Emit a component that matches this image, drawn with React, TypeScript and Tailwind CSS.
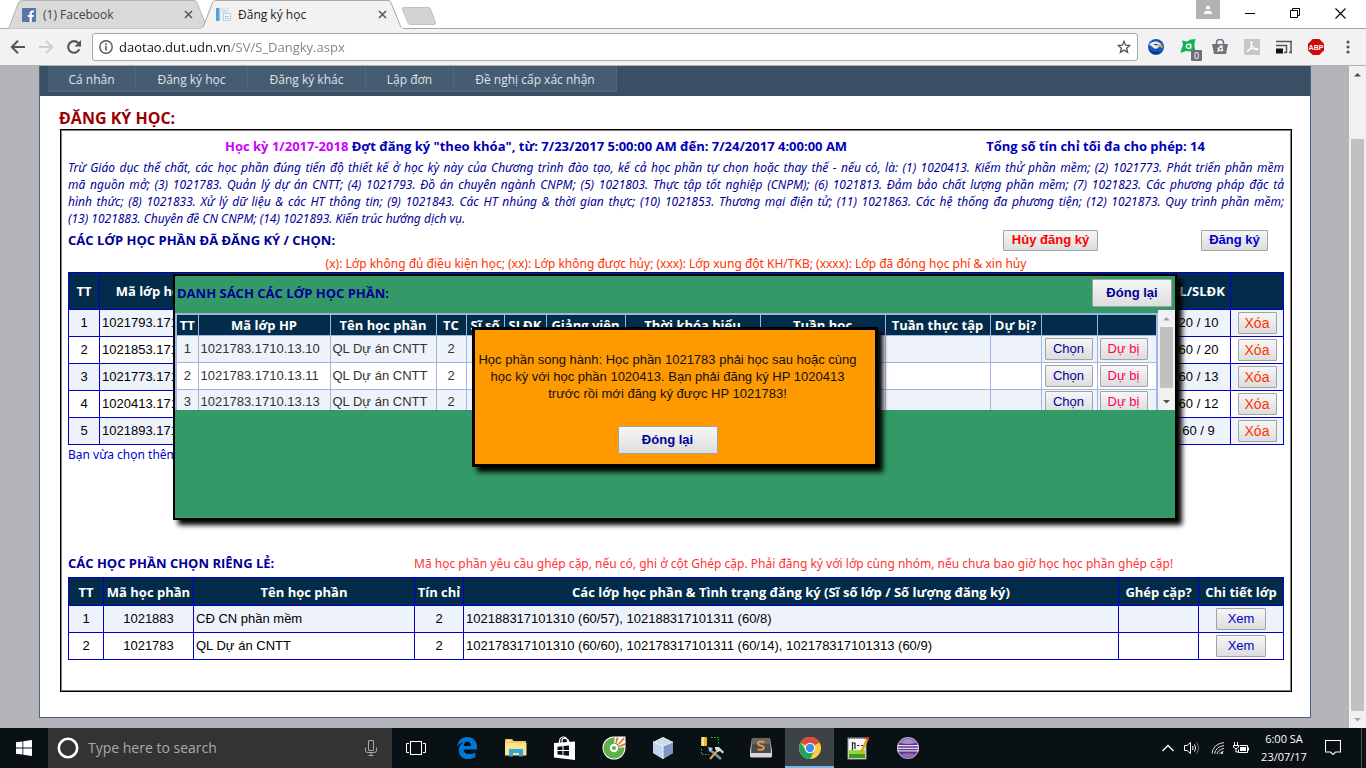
import React from "react";

const UI = "font-['Open_Sans','Noto_Sans',sans-serif]";
const NOTO = "font-['Noto_Sans','Open_Sans',sans-serif]";
const ARIAL = "font-['Liberation_Sans',sans-serif]";

/* ---------- Browser icons ---------- */

function CloseX() {
  return (
    <svg width="9" height="9" viewBox="0 0 9 9" stroke="#5a5a5a" strokeWidth="1.6" fill="none">
      <path d="M1 1l7 7M8 1l-7 7" />
    </svg>
  );
}

function FacebookIcon() {
  return (
    <svg width="14" height="14" viewBox="0 0 14 14">
      <rect width="14" height="14" fill="#5b74ae" />
      <path d="M9.8 14V8.9h1.8l.3-2H9.8V5.6c0-.7.3-1.1 1.1-1.1h1.1V2.6c-.3 0-.9-.1-1.5-.1-1.8 0-2.9 1-2.9 2.8v1.6H5.8v2h1.8V14z" fill="#fff" />
    </svg>
  );
}

function PageIcon() {
  return (
    <svg width="15" height="15" viewBox="0 0 15 15">
      <rect x="0" y="1" width="3.500" height="13" fill="#4fa3d8" />
      <rect x="4.500" y="1.500" width="8" height="11" fill="#e9eff6" stroke="#dde4ec" />
      <rect x="7.500" y="6.500" width="7" height="7" fill="#f5f8fb" stroke="#c3cfdc" />
      <path d="M6 4h5M9 9.500h4M9 11.500h4" stroke="#b5c3d4" strokeWidth="1" />
    </svg>
  );
}

function TabShape({ active }: { active?: boolean }) {
  return (
    <svg className="absolute inset-0 h-full w-full" viewBox="0 0 204 29" preserveAspectRatio="none">
      <path
        d="M0 29L1 28.500C3 28 3.500 26.500 4 25L12 4C13 1.500 13.500.5 15.500.5H188C190 .5 190.500 1.500 191.500 4L200 25C200.500 26.500 201 28 203 28.500L204 29z"
        fill={active ? "#f2f2f2" : "#d9d9d9"}
        stroke={active ? "#a8a8a8" : "#b4b4b4"}
      />
      {active && <path d="M1 28.500H203" stroke="#f2f2f2" strokeWidth="1.500" />}
    </svg>
  );
}

function BrowserTab({ title, icon, active }: { title: string; icon: React.ReactNode; active?: boolean }) {
  return (
    <div className={"relative flex h-[29px] w-[204px] shrink-0 items-center pr-4 pl-4 " + (active ? "z-10 -ml-[10px]" : "")}>
      <TabShape active={active} />
      <div className="relative flex w-full items-center gap-[7px]">
        {icon}
        <span className={"grow text-[12px] leading-4 " + (active ? "text-[#222]" : "text-[#444]")}>{title}</span>
        <button aria-label={"Close " + title} className="flex size-3 items-center justify-center">
          <CloseX />
        </button>
      </div>
    </div>
  );
}

function TabStrip() {
  return (
    <div className="flex h-[29px] shrink-0 items-start border-b border-[#a8a8a8] bg-white pl-[6px]">
      <BrowserTab title="(1) Facebook" icon={<FacebookIcon />} />
      <BrowserTab title="Đăng ký học" icon={<PageIcon />} active />
      <button aria-label="New tab" className="-ml-[3px] mt-[7px]">
        <svg width="36" height="18" viewBox="0 0 36 18">
          <path d="M2.500.5H27.500Q29 .5 29.500 2L34.500 15.500Q35 17.500 33 17.500H9.500Q7.500 17.500 7 16L1.500 2.500Q1 .5 2.500.5z" fill="#d3d3d3" stroke="#c0c0c0" />
        </svg>
      </button>
      <div className="ml-auto flex items-start">
        <button aria-label="Profile" className="flex h-[19px] w-6 items-center justify-center bg-[#b2b2b2]">
          <svg width="10" height="10" viewBox="0 0 10 10" fill="#fff">
            <circle cx="5" cy="2.500" r="2" />
            <path d="M1 9V7.800C1 6.500 3 5.700 5 5.700s4 .8 4 2.100V9z" />
          </svg>
        </button>
        <button aria-label="Minimize" className="mt-2 ml-[25px] flex h-3 w-[10px] items-center">
          <svg width="10" height="2" viewBox="0 0 10 2"><rect y="0" width="10" height="1" fill="#000" /></svg>
        </button>
        <button aria-label="Restore" className="mt-2 ml-[35px]">
          <svg width="10" height="10" viewBox="0 0 10 10" fill="none" stroke="#000">
            <path d="M.5 2.500h7v7h-7zM2.500 2.500v-2h7v7h-2" />
          </svg>
        </button>
        <button aria-label="Close window" className="mt-2 mr-5 ml-[35px]">
          <svg width="11" height="11" viewBox="0 0 11 11" fill="none" stroke="#000" strokeWidth="1.100">
            <path d="M.5.5l10 10M10.500.5l-10 10" />
          </svg>
        </button>
      </div>
    </div>
  );
}

function Toolbar() {
  return (
    <div className="flex h-[37px] shrink-0 items-center border-b border-[#b0b0b0] bg-[#f2f2f2] pr-[10px] pl-[10px]">
      <button aria-label="Back">
        <svg width="16" height="16" viewBox="0 0 16 16" fill="none" stroke="#555" strokeWidth="2">
          <path d="M15 8H2.500M8 1.800L1.800 8L8 14.200" />
        </svg>
      </button>
      <button aria-label="Forward" className="ml-3">
        <svg width="16" height="16" viewBox="0 0 16 16" fill="none" stroke="#cfcfcf" strokeWidth="2">
          <path d="M1 8h12.500M8 1.800L14.200 8L8 14.200" />
        </svg>
      </button>
      <button aria-label="Reload" className="ml-3">
        <svg width="16" height="16" viewBox="0 0 16 16" fill="none">
          <path d="M13.300 10.200A5.800 5.800 0 1 1 12.300 4.100" stroke="#555" strokeWidth="2.100" />
          <path d="M15 1v6.500H8.500z" fill="#555" />
        </svg>
      </button>
      <label className="ml-[10px] flex h-7 grow items-center rounded-[3px] border border-[#a9a9a9] bg-white px-[6px]">
        <svg width="14" height="14" viewBox="0 0 14 14" fill="none" stroke="#555" strokeWidth="1.400">
          <circle cx="7" cy="7" r="6.200" />
          <path d="M7 6v4.500M7 3.300v1.600" strokeWidth="1.600" />
        </svg>
        <input
          aria-label="Address"
          defaultValue="daotao.dut.udn.vn/SV/S_Dangky.aspx"
          className="ml-[6px] grow bg-[linear-gradient(90deg,#111_112px,#808080_112px)] bg-clip-text text-[13px] leading-5 text-transparent outline-none"
        />
        <svg width="14" height="14" viewBox="0 0 14 14" fill="none" stroke="#555" strokeWidth="1.300">
          <path d="M7 1.300l1.600 3.900 4.200.3-3.200 2.700 1 4.100L7 10.100l-3.600 2.200 1-4.100L1.200 5.500l4.200-.3z" />
        </svg>
      </label>
      <div className="ml-[10px] flex items-center gap-4">
        <svg width="16" height="16" viewBox="0 0 16 16">
          <circle cx="8" cy="8" r="8" fill="#1458b8" />
          <path d="M1 5.500C4 2 9 1.500 12 4c1 1 2 2 2.600 4.500C12 7.500 10 8 9 9.500c-2 .8-3.500-.5-4.500-1.500C3.500 7 2.500 6.500 1 5.500z" fill="#e9eef5" />
          <path d="M9.500 5.500c2.500-1 5 .5 5.300 4-1.500-1.500-3-2-5-1.500z" fill="#efa11f" />
          <path d="M5 5.500l4.500-.8-1 1.800z" fill="#223" />
          <path d="M1 10c3 3 8 4 12 2-3 4-9.500 4.500-12-2z" fill="#0a3276" />
        </svg>
        <div className="relative size-4">
          <svg width="16" height="16" viewBox="0 0 16 16">
            <path d="M2 1.500L7 2.500L10.500.5L15.500 0L14.500 4.500L14.500 8L15.500 12L10 12.500L6 12L.5 14L1.500 9.500L3 6z" fill="#14b455" />
            <circle cx="8.500" cy="7.200" r="2.100" fill="none" stroke="#fff" strokeWidth="1.200" />
            <path d="M10.800 4.800V9.700" stroke="#fff" strokeWidth="1.200" />
          </svg>
          <span className="absolute top-[11px] left-[11px] flex h-[11px] w-[11px] items-center justify-center rounded-[1px] bg-[#6d7080] text-[9px] leading-none text-white">0</span>
        </div>
        <svg width="16" height="16" viewBox="0 0 16 16">
          <path d="M0 5h16l-2 10H2z" fill="#6f717d" />
          <path d="M4.500 6V3.500a3.500 3 0 0 1 7 0V6" fill="none" stroke="#6f717d" strokeWidth="1.600" />
          <path d="M5 13l1-3-1-1 2-.5 1-2h3l-.5 2.500 1 2.500-1.500 1-2-.5z" fill="#f2f2f2" />
          <circle cx="8.500" cy="9.800" r="1.100" fill="#6f717d" />
        </svg>
        <svg width="16" height="16" viewBox="0 0 16 16">
          <rect width="16" height="16" fill="#c6c6c6" />
          <path d="M3 13c2-1 4.500-5 5-9.500.2-1-1.200-1-1 0C7.500 7 10 10.500 13 10.800c1 0 1-1-.2-1.200C10 9.200 5.500 10 3.200 12" fill="none" stroke="#fff" strokeWidth="1.200" />
        </svg>
        <svg width="16" height="14" viewBox="0 0 16 14">
          <path d="M0 1.500h16M15 1v12M0 5.500h11M10.500 5v8M8 12.500h3M13 12.500h3" stroke="#555" strokeWidth="1.500" fill="none" />
          <rect x="0" y="8.500" width="7" height="5" fill="#111" />
        </svg>
        <svg width="16" height="16" viewBox="0 0 16 16">
          <path d="M4.700 0h6.600L16 4.700v6.600L11.300 16H4.700L0 11.300V4.700z" fill="#cf0a0a" />
          <text x="8" y="10.500" textAnchor="middle" fontSize="7" fontWeight="700" fontFamily="Liberation Sans" fill="#fff">ABP</text>
        </svg>
        <button aria-label="Menu" className="flex w-4 justify-center">
          <svg width="4" height="14" viewBox="0 0 4 14" fill="#555">
            <circle cx="2" cy="2" r="1.600" /><circle cx="2" cy="7" r="1.600" /><circle cx="2" cy="12" r="1.600" />
          </svg>
        </button>
      </div>
    </div>
  );
}

/* ---------- Page ---------- */

const btnBase =
  "rounded-[1px] border border-[#a3a3a3] bg-gradient-to-b from-[#f6f6f6] to-[#dddddd] leading-4 whitespace-nowrap " + ARIAL;

function NavBar() {
  const items = ["Cá nhân", "Đăng ký học", "Đăng ký khác", "Lập đơn", "Đề nghị cấp xác nhận"];
  const widths = ["w-[88px]", "w-[112px]", "w-[118px]", "w-[88px]", "w-[163px]"];
  return (
    <nav className="flex h-[30px] items-start bg-[#3a4f63] pl-2">
      {items.map((t, i) => (
        <a
          key={t}
          href="#"
          className={"flex h-[26px] items-center justify-center border-r border-b border-[#4b6783] bg-[#465c71] pt-[2px] text-[12px] text-[#dde4ec] " + widths[i]}
        >
          {t}
        </a>
      ))}
    </nav>
  );
}

const registered = [
  ["1", "1021793.171", "20 / 10"],
  ["2", "1021853.171", "60 / 20"],
  ["3", "1021773.171", "60 / 13"],
  ["4", "1020413.171", "60 / 12"],
  ["5", "1021893.171", "60 / 9"],
];

const cell = "border border-[#0000cc]";
const headCell = cell + " p-0 text-[13px] font-bold whitespace-nowrap text-white";

function RegisteredTable() {
  return (
    <table className={"w-full table-fixed border-collapse text-[13px] leading-4 text-black " + ARIAL}>
      <colgroup>
        <col className="w-[31px]" />
        <col className="w-[140px]" />
        <col />
        <col className="w-[64px]" />
        <col className="w-[53px]" />
      </colgroup>
      <thead>
        <tr className={"h-[37px] bg-[#032c4b] " + UI}>
          <th className={headCell}>TT</th>
          <th className={headCell}>Mã lớp học phần</th>
          <th className={headCell}></th>
          <th className={headCell}>SL/SLĐK</th>
          <th className={headCell}></th>
        </tr>
      </thead>
      <tbody>
        {registered.map(([n, code, count]) => (
          <tr key={n} className="h-[27px] odd:bg-[#eef2fb]">
            <td className={cell + " p-0 text-center"}>{n}</td>
            <td className={cell + " px-[2px] py-0"}>{code}</td>
            <td className={cell + " p-0"}></td>
            <td className={cell + " p-0 text-center"}>{count}</td>
            <td className={cell + " p-0 text-center"}>
              <button className={btnBase + " block mx-auto h-[22px] w-[39px] text-[14px] text-[#ff3300]"}>Xóa</button>
            </td>
          </tr>
        ))}
      </tbody>
    </table>
  );
}

const singles = [
  ["1", "1021883", "CĐ CN phần mềm", "2", "102188317101310 (60/57), 102188317101311 (60/8)"],
  ["2", "1021783", "QL Dự án CNTT", "2", "102178317101310 (60/60), 102178317101311 (60/14), 102178317101313 (60/9)"],
];

function SinglesTable() {
  return (
    <table className={"mt-[5px] w-full table-fixed border-collapse text-[13px] leading-4 text-black " + ARIAL}>
      <colgroup>
        <col className="w-[35px]" />
        <col className="w-[90px]" />
        <col className="w-[221px]" />
        <col className="w-[49px]" />
        <col />
        <col className="w-[80px]" />
        <col className="w-[85px]" />
      </colgroup>
      <thead>
        <tr className={"h-7 bg-[#032c4b] " + UI}>
          {["TT", "Mã học phần", "Tên học phần", "Tín chỉ", "Các lớp học phần & Tình trạng đăng ký (Sĩ số lớp / Số lượng đăng ký)", "Ghép cặp?", "Chi tiết lớp"].map((h) => (
            <th key={h} className={headCell}>{h}</th>
          ))}
        </tr>
      </thead>
      <tbody>
        {singles.map(([n, code, name, tc, classes]) => (
          <tr key={n} className="h-[27px] odd:bg-[#eef2fb]">
            <td className={cell + " p-0 text-center"}>{n}</td>
            <td className={cell + " p-0 text-center"}>{code}</td>
            <td className={cell + " px-[2px] py-0"}>{name}</td>
            <td className={cell + " p-0 text-center"}>{tc}</td>
            <td className={cell + " px-[2px] py-0"}>{classes}</td>
            <td className={cell + " p-0"}></td>
            <td className={cell + " p-0 text-center"}>
              <button className={btnBase + " block mx-auto h-[22px] w-[50px] text-[13px] text-[#0000cc]"}>Xem</button>
            </td>
          </tr>
        ))}
      </tbody>
    </table>
  );
}

const paragraph = [
  "Trừ Giáo dục thể chất, các học phần đúng tiến độ thiết kế ở học kỳ này của Chương trình đào tạo, kể cả học phần tự chọn hoặc thay thế - nếu có, là: (1) 1020413. Kiểm thử phần mềm; (2) 1021773. Phát triển phần mềm",
  "mã nguồn mở; (3) 1021783. Quản lý dự án CNTT; (4) 1021793. Đồ án chuyên ngành CNPM; (5) 1021803. Thực tập tốt nghiệp (CNPM); (6) 1021813. Đảm bảo chất lượng phần mềm; (7) 1021823. Các phương pháp đặc tả",
  "hình thức; (8) 1021833. Xử lý dữ liệu & các HT thông tin; (9) 1021843. Các HT nhúng & thời gian thực; (10) 1021853. Thương mại điện tử; (11) 1021863. Các hệ thống đa phương tiện; (12) 1021873. Quy trình phần mềm;",
];

function PageContent() {
  return (
    <main className="mr-[38px] ml-[39px] border-x border-b border-[#496280] bg-white pb-[25px]">
      <NavBar />
      <h1 className="mt-3 ml-[19px] text-[16px] leading-[21px] font-bold text-[#990000]">ĐĂNG KÝ HỌC:</h1>
      <section className="mr-[18px] ml-5 border border-black px-[7px] pt-[7px] pb-[31px] shadow-[inset_0_0_0_1px_#808080]">
        <div className="flex h-[18px] items-center pr-[79px] pl-[157px] text-[13px] leading-[18px] font-bold whitespace-nowrap text-[#0000bb]">
          <p>
            <span className="text-[#cc00ff]">Học kỳ 1/2017-2018</span> Đợt đăng ký "theo khóa", từ: 7/23/2017 5:00:00 AM đến: 7/24/2017 4:00:00 AM
          </p>
          <p className="ml-auto">Tổng số tín chỉ tối đa cho phép: 14</p>
        </div>
        <p className={"mt-1 text-[12px] leading-[17px] text-[#000099] italic " + NOTO}>
          {paragraph.map((l) => (
            <span key={l} className="block whitespace-nowrap [text-align-last:justify]">{l}</span>
          ))}
          <span className="block">(13) 1021883. Chuyên đề CN CNPM; (14) 1021893. Kiến trúc hướng dịch vụ.</span>
        </p>
        <div className="mt-px flex h-6 items-center pr-4">
          <h2 className="text-[13px] leading-[17px] font-bold text-[#000099]">CÁC LỚP HỌC PHẦN ĐÃ ĐĂNG KÝ / CHỌN:</h2>
          <button className={btnBase + " ml-auto h-[21px] w-[95px] text-[13px] font-bold text-[#ff0000]"}>Hủy đăng ký</button>
          <button className={btnBase + " ml-[103px] h-[21px] w-[67px] text-[13px] font-bold text-[#0000cc]"}>Đăng ký</button>
        </div>
        <p className={"mt-1 h-4 text-center text-[12px] leading-4 text-[#ff3300] " + NOTO}>
          (x): Lớp không đủ điều kiện học; (xx): Lớp không được hủy; (xxx): Lớp xung đột KH/TKB; (xxxx): Lớp đã đóng học phí &amp; xin hủy
        </p>
        <RegisteredTable />
        <p className={"h-5 text-[12px] leading-5 text-[#0000cc] " + NOTO}>Bạn vừa chọn thêm</p>
        <div className="mt-[90px] flex h-[17px] items-center">
          <h2 className="w-[346px] text-[13px] leading-[17px] font-bold text-[#000099]">CÁC HỌC PHẦN CHỌN RIÊNG LẺ:</h2>
          <p className={"text-[12px] leading-[17px] text-[#ff3333] " + NOTO}>
            Mã học phần yêu cầu ghép cặp, nếu có, ghi ở cột Ghép cặp. Phải đăng ký với lớp cùng nhóm, nếu chưa bao giờ học học phần ghép cặp!
          </p>
        </div>
        <SinglesTable />
      </section>
    </main>
  );
}

function Scrollbar({ children, upMuted }: { children: React.ReactNode; upMuted?: boolean }) {
  return (
    <div className="flex w-[17px] shrink-0 flex-col items-center bg-[#f1f1f1]">
      <svg width="17" height="17" viewBox="0 0 17 17"><path d="M5 10.500L8.500 7l3.500 3.500z" fill={upMuted ? "#a3a3a3" : "#505050"} /></svg>
      <div className="flex w-[13px] grow flex-col">{children}</div>
      <svg width="17" height="17" viewBox="0 0 17 17"><path d="M5 7l3.500 3.500L12 7z" fill={upMuted ? "#505050" : "#a3a3a3"} /></svg>
    </div>
  );
}

const mCell = "border border-[#9fb6e3]";

function ClassDialog() {
  const heads = ["TT", "Mã lớp HP", "Tên học phần", "TC", "Sĩ số", "SLĐK", "Giảng viên", "Thời khóa biểu", "Tuần học", "Tuần thực tập", "Dự bị?", "", ""];
  return (
    <div role="dialog" aria-label="Danh sách các lớp học phần" className="absolute top-[208px] right-[172px] left-[173px] h-[246px] border-2 border-black bg-[#339966] shadow-[5px_5px_5px_#000]">
      <div className="flex h-[34px] items-center justify-between pr-[3px] pl-[2px]">
        <h2 className="text-[13px] leading-5 font-bold text-[#000099]">DANH SÁCH CÁC LỚP HỌC PHẦN:</h2>
        <button className={btnBase + " h-7 w-20 text-[13px] font-bold text-[#000099]"}>Đóng lại</button>
      </div>
      <div className="flex h-[100px] overflow-hidden">
        <div className="grow overflow-hidden pt-[3px]">
          <table className={"w-full table-fixed border-collapse border-2 border-[#9fb6e3] text-[13px] leading-4 text-[#333] " + ARIAL}>
            <colgroup>
              <col className="w-[22px]" />
              <col className="w-[132px]" />
              <col className="w-[106px]" />
              <col className="w-[30px]" />
              <col className="w-[38px]" />
              <col className="w-[42px]" />
              <col className="w-[79px]" />
              <col className="w-[135px]" />
              <col />
              <col className="w-[105px]" />
              <col className="w-[51px]" />
              <col className="w-[56px]" />
              <col className="w-[60px]" />
            </colgroup>
            <thead>
              <tr className={"h-[21px] bg-[#032c4b] " + UI}>
                {heads.map((h, i) => (
                  <th key={i} className={mCell + " p-0 text-[13px] font-bold whitespace-nowrap text-white"}>{h}</th>
                ))}
              </tr>
            </thead>
            <tbody>
              {["10", "11", "13"].map((s, i) => (
                <tr key={s} className="h-[27px] bg-white odd:bg-[#eef2fb]">
                  <td className={mCell + " p-0 text-center"}>{i + 1}</td>
                  <td className={mCell + " px-[2px] py-0"}>{"1021783.1710.13." + s}</td>
                  <td className={mCell + " px-[2px] py-0"}>QL Dự án CNTT</td>
                  <td className={mCell + " p-0 text-center"}>2</td>
                  {[0, 1, 2, 3, 4, 5, 6].map((k) => (
                    <td key={k} className={mCell + " p-0"}></td>
                  ))}
                  <td className={mCell + " py-0 pr-0 pl-[3px]"}>
                    <button className={btnBase + " block h-[22px] w-12 text-[13px] text-[#000099]"}>Chọn</button>
                  </td>
                  <td className={mCell + " py-0 pr-0 pl-[2px]"}>
                    <button className={btnBase + " block h-[22px] w-12 text-[13px] text-[#ff0055]"}>Dự bị</button>
                  </td>
                </tr>
              ))}
            </tbody>
          </table>
        </div>
        <Scrollbar upMuted>
          <div className="h-[61px] bg-[#c1c1c1]" />
        </Scrollbar>
      </div>
    </div>
  );
}

function AlertDialog() {
  return (
    <div className="absolute inset-x-0 top-[261px] flex justify-center">
      <div role="alertdialog" aria-label="Thông báo" className={"flex h-[140px] w-[406px] flex-col items-center border-[3px] border-black bg-[#ff9900] pt-[21px] pr-[14px] shadow-[5px_5px_5px_#000] " + ARIAL}>
        <p className="text-center text-[13px] leading-[17px] whitespace-nowrap text-[#111]">
          Học phần song hành: Học phần 1021783 phải học sau hoặc cùng<br />
          học kỳ với học phần 1020413. Bạn phải đăng ký HP 1020413<br />
          trước rồi mới đăng ký được HP 1021783!
        </p>
        <button className={btnBase + " mt-6 h-7 w-[100px] text-[13px] font-bold text-[#000099]"}>Đóng lại</button>
      </div>
    </div>
  );
}

/* ---------- Taskbar ---------- */

function TaskButton({ label, active, children }: { label: string; active?: boolean; children: React.ReactNode }) {
  return (
    <button
      aria-label={label}
      className={"flex h-10 w-[49px] items-center justify-center " + (active ? "border-b-2 border-[#76b9ed] bg-[#3d4246] pt-[2px]" : "")}
    >
      {children}
    </button>
  );
}

function Taskbar() {
  return (
    <footer className="flex h-10 shrink-0 items-center bg-[#0a1115]">
      <button aria-label="Start" className="flex h-10 w-12 items-center justify-center">
        <svg width="16" height="16" viewBox="0 0 16 16" fill="#fff">
          <path d="M0 2.300L6.500 1.400V7.600H0zM7.300 1.300L16 0V7.600H7.300zM0 8.400H6.500V14.600L0 13.700zM7.300 8.400H16V16L7.300 14.700z" />
        </svg>
      </button>
      <label className="flex h-10 w-[344px] items-center bg-[#333] pr-[15px] pl-[9px]">
        <svg width="22" height="22" viewBox="0 0 22 22"><circle cx="11" cy="11" r="9.200" fill="none" stroke="#fff" strokeWidth="2.600" /></svg>
        <input aria-label="Search" placeholder="Type here to search" className="ml-[9px] w-0 grow bg-transparent text-[14px] leading-5 outline-none placeholder:text-[#aaa]" />
        <svg width="12" height="16" viewBox="0 0 12 16" fill="none" stroke="#aaa">
          <rect x="3.500" y=".5" width="5" height="10" rx=".5" />
          <path d="M.5 7.500V10.500Q.5 12.500 2.500 12.500H9.500Q11.500 12.500 11.500 10.500V7.500M6 12.500V15.500M3.500 15.500H8.500" />
        </svg>
      </label>
      <button aria-label="Task view" className="flex h-10 w-12 items-center justify-center">
        <svg width="20" height="14" viewBox="0 0 20 14" fill="none" stroke="#fff">
          <rect x="4.500" y=".5" width="11" height="13" />
          <path d="M3 2.500H.5V11.500H3M17 2.500H19.500V11.500H17" />
        </svg>
      </button>
      <div className="ml-[2px] flex">
        <TaskButton label="Edge">
          <svg width="20" height="22" viewBox="0 0 20 22">
            <path d="M0 9.500C.8 4 4.500 0 10.300 0 16 0 20 4 20 10v2.600H6.500c.2 3 2.600 4.500 5.800 4.500 2.200 0 4.200-.5 6-1.600v4.700c-2 1.200-4.600 1.800-7.300 1.800C5.500 22 1.800 18.700 1.800 13.400c0-3.400 1.800-6.200 4.700-7.800C3.800 5.800 1.500 7.200 0 9.500zM6.700 9h7.200c0-2.700-1.300-4.400-3.600-4.400C8.300 4.600 7 6.500 6.700 9z" fill="#0078d7" />
          </svg>
        </TaskButton>
        <TaskButton label="File Explorer">
          <svg width="22" height="20" viewBox="0 0 22 20">
            <path d="M0 2Q0 1 1 1H7l1.500 2H20.500Q21 3 21 3.500V17H0z" fill="#f0c65a" />
            <path d="M1.500 2.500h4v1h-4z" fill="#fff" />
            <path d="M0 5H21.500V17.500H0z" fill="#fde28f" />
            <path d="M4 18.500V12Q4 11 5 11H17Q18 11 18 12V18.500H14V15H8V18.500z" fill="#2da8e0" />
          </svg>
        </TaskButton>
        <TaskButton label="Store">
          <svg width="21" height="24" viewBox="0 0 21 24">
            <path d="M5.500 8V5Q6 1 9.500 1Q13 1 13.500 5V6.500M8 7V4Q8.500 2 11.500 2.500Q14.500 3 15 6" fill="none" stroke="#fff" strokeWidth="1.200" />
            <path d="M0 7L21 5.500V24L0 21.500z" fill="#fff" />
            <path d="M3.500 10.700L8.500 10.200V14H3.500zM9.500 10.100L15 9.500V14H9.500zM3.500 15H8.500V19L3.500 18.500zM9.500 15H15V19.800L9.500 19.200z" fill="#0a1115" />
          </svg>
        </TaskButton>
        <TaskButton label="Cốc Cốc">
          <svg width="24" height="24" viewBox="0 0 24 24">
            <path d="M12 .5H23.500V12A11.500 11.500 0 1 1 12 .5z" fill="#fff" />
            <path d="M13 1.600L11.700 7A5 5 0 1 0 17 12.300L22.400 11A10.500 10.500 0 1 1 13 1.600z" fill="#5fb04c" />
            <circle cx="12" cy="12" r="5.600" fill="#5fb04c" />
            <circle cx="12" cy="12" r="4.200" fill="#fff" />
            <circle cx="12" cy="12" r="2" fill="#5fb04c" />
            <path d="M13.500 6.500L14.500 1.500l2 .2-1.500 5.300zM16 7.800L21.500 1.500l1.300 1.300-5.500 6zM17.500 9.600L23 7v2.200l-5 2z" fill="#f26a2a" />
          </svg>
        </TaskButton>
        <TaskButton label="VirtualBox">
          <svg width="22" height="22" viewBox="0 0 22 22">
            <path d="M11 0L21 5V16L11 22L1 16V5z" fill="#8aa3c8" />
            <path d="M11 0L21 5L11 9L1 5z" fill="#c9dfe0" />
            <path d="M1 5L11 9V22L1 16z" fill="#c0d3f0" />
            <path d="M11 9L21 5V16L11 22z" fill="#8095c0" />
            <path d="M1 5L11 9L21 5M11 9V22" stroke="#eef6fb" fill="none" />
          </svg>
        </TaskButton>
        <TaskButton label="SQL tools">
          <svg width="24" height="24" viewBox="0 0 24 24">
            <rect x="1" y="1" width="6" height="9" rx="1" fill="#e9b52c" />
            <rect x="2" y="1" width="2" height="9" fill="#fbe48f" />
            <path d="M11 1.500H18.500V8M1.500 13V18.500H9" fill="none" stroke="#35c22d" strokeDasharray="1.500 1.500" />
            <path d="M9 13L21 23" stroke="#7d97b8" strokeWidth="2.500" />
            <path d="M8 11l5 1-3 4z" fill="#b8c7da" />
            <path d="M10 23L18 14" stroke="#d9a441" strokeWidth="2.200" />
            <path d="M15 11l4 0 5 5-1.500 1.500L20 15l-2 1-3-3z" fill="#d7dfe8" />
          </svg>
        </TaskButton>
        <TaskButton label="Sublime Text">
          <svg width="24" height="20" viewBox="0 0 24 20">
            <path d="M1 13L3 0H21L23 13V18Q23 19.500 21.500 19.500H2.500Q1 19.500 1 18z" fill="#d8d8d8" />
            <path d="M3 0H21L22 15H2z" fill="#4b4b4b" />
            <path d="M3 0H21L21.500 6H2.500z" fill="#666" />
            <path d="M15.500 4Q9 2.500 9 5.500Q9 7.300 12 7.700Q15.300 8.300 14.800 10.300Q14.200 12.500 8.500 11.300" fill="none" stroke="#f49a45" strokeWidth="1.800" />
          </svg>
        </TaskButton>
        <TaskButton label="Chrome" active>
          <svg width="22" height="22" viewBox="0 0 22 22">
            <circle cx="11" cy="11" r="11" fill="#ffcd41" />
            <path d="M11 11L1.500 5.500A11 11 0 0 1 20.500 5.500z" fill="#dd4b3e" />
            <path d="M11 0A11 11 0 0 1 20.500 5.500H11L6.500 8z" fill="#dd4b3e" />
            <path d="M1.500 5.500A11 11 0 0 0 11 22L15.500 13.500L11 11L6.500 13z" fill="#1da462" />
            <circle cx="11" cy="11" r="5.300" fill="#fff" />
            <circle cx="11" cy="11" r="4.200" fill="#4a8af4" />
          </svg>
        </TaskButton>
        <TaskButton label="Notepad++">
          <svg width="23" height="24" viewBox="0 0 23 24">
            <rect x="1" y="2" width="18" height="21" fill="#f8f8f8" stroke="#999" />
            <rect x="2" y="14" width="16" height="8" fill="#8fdc3a" />
            <path d="M2 18H18V22H2z" fill="#3c9a14" />
            <path d="M2 2h16" stroke="#555" strokeDasharray="1 1.500" strokeWidth="2" />
            <path d="M5.500 6V14M5.500 7H8V13M10 9.500h2.500M14 9.500h2" stroke="#222" fill="none" strokeWidth="1.200" />
            <path d="M13.500 18L20.500 2.500" stroke="#e5a321" strokeWidth="2.600" />
            <path d="M20 3.500L21.300 1" stroke="#d33" strokeWidth="2.600" />
          </svg>
        </TaskButton>
        <TaskButton label="Eclipse">
          <svg width="24" height="22" viewBox="0 0 24 22">
            <circle cx="12" cy="11" r="11" fill="#b79bd3" />
            <circle cx="12" cy="11" r="9.800" fill="#5a3785" />
            <path d="M4 6Q12-3 20 6Q12 8 4 6z" fill="#a98bc9" />
            <path d="M1.200 8.700H22.800M1 11.300H23M1.200 13.900H22.800" stroke="#e6daf1" strokeWidth="1.300" />
            <path d="M4 17.500Q12 24 20 17.500Q12 15 4 17.500z" fill="#8f6bb5" />
          </svg>
        </TaskButton>
      </div>
      <div className="ml-auto flex h-10 items-center">
        <svg width="12" height="8" viewBox="0 0 12 8" fill="none" stroke="#fff" strokeWidth="1.300"><path d="M.5 7L6 1.500L11.500 7" /></svg>
        <svg className="ml-[10px]" width="17" height="14" viewBox="0 0 17 14" fill="none" stroke="#fff">
          <path d="M.5 4.500H3L6.500 1.500V12.500L3 9.500H.5z" />
          <path d="M8.500 5Q9.700 7 8.500 9M10.500 3.500Q12.800 7 10.500 10.500" />
          <path d="M12.500 1.500Q16.500 7 12.500 12.500" stroke="#777" />
        </svg>
        <svg className="ml-[10px]" width="14" height="14" viewBox="0 0 14 14" fill="none" stroke="#ddd">
          <path d="M1 12.500Q2 3 13 1.500M3.500 13Q4.500 6 13 4.500M6 13Q7 8.500 13 7.500M8.500 13Q9.500 11 12.500 10.500" />
          <circle cx="11" cy="12" r="1" fill="#fff" stroke="none" />
        </svg>
        <svg className="ml-[8px]" width="17" height="13" viewBox="0 0 17 13" fill="none" stroke="#fff">
          <path d="M1.500 0V3M4.500 0V3M.5 3.500H5.500V5L4 6.500H2L.5 5zM3 7V10H5" />
          <path d="M6.500 3.500H14.500V10.500H5.500V7.500M15.500 5.500V8.500" />
          <rect x="7" y="5" width="6" height="4" fill="#fff" stroke="none" />
        </svg>
        <div className="ml-[9px] w-[50px] text-center text-[11px] leading-[18px] whitespace-nowrap text-white">
          <p>6:00 SA</p>
          <p>23/07/17</p>
        </div>
        <button aria-label="Notifications" className="ml-4">
          <svg width="16" height="16" viewBox="0 0 16 16" fill="none" stroke="#fff" strokeWidth="1.100">
            <path d="M.5.5H15.500V12H10.500L8 14.500L5.500 12H.5z" />
          </svg>
        </button>
        <div className="mr-1 ml-5 h-10 w-px bg-[#555]" />
      </div>
    </footer>
  );
}

export default function App() {
  return (
    <div className={"flex h-screen flex-col overflow-hidden bg-[#b4b5bb] " + UI}>
      <TabStrip />
      <Toolbar />
      <div className="flex min-h-0 grow">
        <div className="relative min-w-0 grow overflow-hidden">
          <PageContent />
          <ClassDialog />
          <AlertDialog />
        </div>
        <Scrollbar>
          <div className="mt-14 grow bg-[#c1c1c1]" />
        </Scrollbar>
      </div>
      <Taskbar />
    </div>
  );
}
